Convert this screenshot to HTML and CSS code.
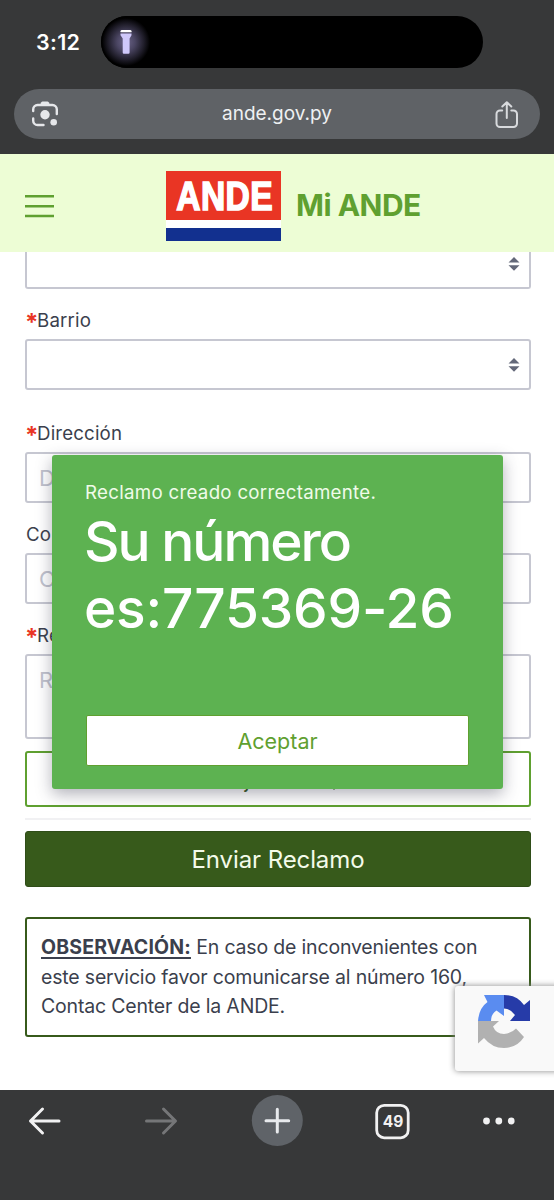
FILE: index.html
```html
<!DOCTYPE html>
<html lang="es">
<head>
<meta charset="utf-8">
<title>Mi ANDE</title>
<link rel="stylesheet" href="styles.css">
</head>
<body>
<div class="phone">
  <div class="chrome-top">
    <div class="status">
      <span class="clock">3:12</span>
      <div class="island">
        <span class="glow">
          <svg width="12" height="26" viewBox="0 0 12 26"><path d="M.5 3.300V2.300Q.5 1 2 1h8q1.500 0 1.500 1.300v1z" fill="#fff"/><path d="M.5 4.500h11v1.700L9.600 9.500V23.500q0 1.200-1.200 1.200H3.900q-1.200 0-1.200-1.200V9.500L.5 6.200z" fill="#cfc8fa"/></svg>
        </span>
      </div>
    </div>
    <div class="urlbar">
      <svg class="lens" width="28" height="28" viewBox="0 0 28 28" fill="none" stroke="#e6e7ea" stroke-width="2.400" stroke-linecap="round"><path d="M2.200 11V9.300A4.300 4.300 0 0 1 6.500 5h15a4.300 4.300 0 0 1 4.300 4.300V14M2.200 18.500v2.200A4.300 4.300 0 0 0 6.500 25h6"/><path d="M9 4.800l1.300-2.600q.4-.7 1.200-.7h5q.8 0 1.200.7L19 4.800z" fill="#e6e7ea" stroke="none"/><circle cx="14" cy="14.700" r="4.700" fill="#e6e7ea" stroke="none"/><circle cx="22.700" cy="22.200" r="3.300" fill="#e6e7ea" stroke="none"/></svg>
      <span class="host">ande.gov.py</span>
      <svg class="share" width="24" height="28" viewBox="0 0 24 28" fill="none" stroke="#d8dadd" stroke-width="2" stroke-linecap="round" stroke-linejoin="round"><path d="M7.200 9.500H5A3.500 3.500 0 0 0 1.500 13v9.500A3.500 3.500 0 0 0 5 26h13.500a3.500 3.500 0 0 0 3.500-3.500V13a3.500 3.500 0 0 0-3.500-3.500h-2.200M11.800 17V1.500M7.300 5.500l4.500-4.300 4.500 4.300"/></svg>
    </div>
  </div>

  <header class="site-header">
    <svg class="burger" width="29" height="24" viewBox="0 0 29 24" stroke="#5fa030" stroke-width="2.500"><path d="M0 2.300h29M0 12.200h29M0 22h29"/></svg>
    <div class="logo"><div class="logo-red"><span>ANDE</span></div><div class="logo-white"></div><div class="logo-blue"></div></div>
    <span class="brand">Mi ANDE</span>
  </header>

  <main class="page">
    <div class="field select cut"><svg width="12" height="16" viewBox="0 0 12 16"><path d="M.5 6.500L6 1l5.500 5.500zM.5 9.200h11L6 14.700z" fill="#636879"/></svg></div>
    <div class="label gap-a"><b>*</b>Barrio</div>
    <div class="field select"><svg width="12" height="16" viewBox="0 0 12 16"><path d="M.5 6.500L6 1l5.500 5.500zM.5 9.200h11L6 14.700z" fill="#636879"/></svg></div>
    <div class="label gap-b"><b>*</b>Dirección</div>
    <div class="field">D</div>
    <div class="label gap-a">Co</div>
    <div class="field">C</div>
    <div class="label gap-a"><b>*</b>Re</div>
    <div class="field area">R</div>
    <div class="attach"><span>Adjuntar</span><svg width="10" height="10" viewBox="0 0 10 10"><path d="M1 3.500h8L5 8z" fill="#35591b"/></svg></div>
    <div class="rule"></div>
    <div class="send"><span>Enviar Reclamo</span></div>
    <div class="note"><p><b>OBSERVACIÓN:</b> En caso de inconvenientes con<br>este servicio favor comunicarse al número 160,<br>Contac Center de la ANDE.</p></div>

    <div class="modal">
      <div class="modal-msg">Reclamo creado correctamente.</div>
      <div class="modal-num"><span class="n1">Su número</span><br><span class="n2">es:775369-26</span></div>
      <div class="accept"><span>Aceptar</span></div>
    </div>

    <div class="captcha">
      <svg width="54" height="54" viewBox="0 0 54 54">
        <path d="M6 0H26V21L18.500 15.500Q13 19 13 26H0Q1 13 9.500 7z" fill="#5a8cf0"/>
        <path d="M26 0Q39 0 46 10L52 5V26H32L37 20Q33 14 26 13.500z" fill="#263ba8"/>
        <path d="M0 26H21L15 31.500Q18 39 26 39Q34 38 38 33.500L46 42Q39 53 26 53Q14 53 6 43L0 48.500z" fill="#b1b1b1"/>
      </svg>
    </div>
  </main>

  <nav class="chrome-bottom">
    <svg width="554" height="62" viewBox="0 0 554 62" fill="none" stroke-linecap="round" stroke-linejoin="round">
      <path d="M59 31H30.500M42.500 19L30.500 31l12 12" stroke="#f1f1f2" stroke-width="3"/>
      <path d="M146.500 31H175M163.500 19l12 12-12 12" stroke="#757678" stroke-width="3"/>
      <circle cx="277.300" cy="30.500" r="25.500" fill="#5f6368"/>
      <path d="M266 30.700h22.700M277.300 19.300V42" stroke="#e8eaed" stroke-width="3"/>
      <rect x="376.700" y="15.300" width="31.500" height="32.500" rx="7.500" stroke="#f1f1f2" stroke-width="2.800"/>
      <circle cx="486.500" cy="31" r="3.400" fill="#f1f1f2"/><circle cx="498.800" cy="31" r="3.400" fill="#f1f1f2"/><circle cx="511.200" cy="31" r="3.400" fill="#f1f1f2"/>
      <text class="tabs" x="393" y="37" text-anchor="middle">49</text>
    </svg>
  </nav>
</div>
</body>
</html>
```
FILE: styles.css
```css
* { box-sizing: border-box; }
body { margin: 0; background: #fff; font-family: Inter, "Liberation Sans", sans-serif; color: #3b3f4d; }
.phone { width: 554px; height: 1200px; overflow: hidden; display: flex; flex-direction: column; }
svg { display: block; flex: none; }
span { white-space: nowrap; }

.chrome-top { height: 154px; background: #373839; padding: 16px 14px 0; flex: none; }
.status { display: flex; align-items: center; height: 52px; }
.clock { width: 87px; padding-left: 22px; color: #fff; font-size: 21.5px; font-weight: 600; letter-spacing: .3px; }
.island { width: 382px; height: 52px; border-radius: 26px; background: #000; overflow: hidden; }
.glow { display: flex; width: 50px; height: 52px; align-items: center; justify-content: center; background: radial-gradient(circle at 25px 26px, #6b6488 0, #4b4663 9px, #1f1d29 18px, #000 24px); }
.urlbar { margin-top: 21px; height: 50px; border-radius: 25px; background: #5f6266; display: flex; align-items: center; justify-content: space-between; padding: 0 21px 0 17px; }
.share { transform: translateY(1px); }
.host { color: #eef0f2; font-size: 19px; transform: translateY(-1px); }

.site-header { height: 98px; background: #edfdd5; flex: none; display: flex; padding-left: 25px; }
.burger { margin-top: 40px; }
.logo { margin: 17px 0 0 112px; width: 115px; }
.logo-red { height: 49px; background: #e93524; color: #fff; display: flex; justify-content: center; align-items: center; }
.logo-red span { font: 700 40px/49px "Liberation Sans", sans-serif; -webkit-text-stroke: 1.6px #fff; letter-spacing: .5px; transform: translate(1px, 1px) scaleX(.84); }
.logo-white { height: 8px; background: #fff; }
.logo-blue { height: 13px; background: #12308f; }
.brand { margin: 35px 0 0 15px; color: #5fa030; font-size: 30px; line-height: 32px; font-weight: 650; letter-spacing: -.5px; }

.page { position: relative; overflow: hidden; height: 838px; flex: none; padding: 0 23px 0 25px; background: #fff; }
.field { height: 51px; border: 2px solid #c6c7d1; border-radius: 3px; padding: 0 12px; font-size: 22px; line-height: 48px; color: #c0c2cd; }
.select { display: flex; align-items: center; justify-content: flex-end; padding-right: 9px; }
.cut { height: 37px; border-top: 0; border-radius: 0 0 3px 3px; align-items: flex-start; padding-top: 4px; }
.label { display: flex; font-size: 18.700px; line-height: 24px; letter-spacing: .15px; padding-left: 1px; }
.label b { width: 12px; margin-left: -1px; padding-right: 1px; color: #e93524; font-size: 24px; line-height: 27px; }
.gap-a { margin-top: 20px; height: 30px; }
.gap-b { margin-top: 32px; height: 30px; }
.area { height: 85px; }
.attach { margin-top: 12px; height: 56px; border: 2px solid #5fa030; border-radius: 3px; display: flex; justify-content: center; align-items: center; gap: 28px; font-size: 21px; color: #35591b; }
.attach span { transform: translateY(1px); }
.attach svg { transform: translateY(8px); }
.rule { margin-top: 11px; height: 2px; background: #f1f1f3; }
.send { margin-top: 11px; height: 56px; background: #375a1b; border: 1px solid #2f4d18; border-radius: 3px; display: flex; align-items: center; justify-content: center; color: #f4fbea; font-size: 24px; letter-spacing: -.1px; }
.note { margin-top: 30px; height: 120px; border: 2px solid #375a1b; border-radius: 3px; padding: 14px; }
.note p { margin: 0; font-size: 19.500px; line-height: 29.500px; letter-spacing: -.18px; white-space: nowrap; }
.note b { letter-spacing: .16px; text-decoration: underline; text-decoration-thickness: 2px; text-underline-offset: 3px; }

.modal { position: absolute; left: 52px; top: 203px; width: 451px; height: 334px; padding: 26px 34px 0; border-radius: 3px; background: #5db251; color: #fff; box-shadow: 0 5px 16px rgba(50, 50, 70, .38); }
.modal-msg { margin-left: -1px; font-size: 18.700px; line-height: 24px; letter-spacing: .29px; color: #effbe9; white-space: nowrap; }
.modal-num { margin: 3px 0 0 -2px; font-size: 55px; line-height: 67px; font-weight: 500; }
.n1 { letter-spacing: -2px; }
.n2 { letter-spacing: -.2px; }
.accept { margin-top: 73px; height: 51px; width: 383px; background: #fff; border: 1px solid #5fa030; border-radius: 2px; display: flex; align-items: center; justify-content: center; color: #5fa030; font-size: 21.500px; }

.captcha { position: absolute; left: 455px; top: 734px; width: 110px; height: 85px; padding: 9px 0 0 23px; background: #f9f9f9; border-radius: 3px; box-shadow: 0 0 6px #888; }

.chrome-bottom { height: 110px; background: #373839; flex: none; }
.tabs { font-size: 15.500px; font-weight: 700; fill: #f1f1f2; }
```
